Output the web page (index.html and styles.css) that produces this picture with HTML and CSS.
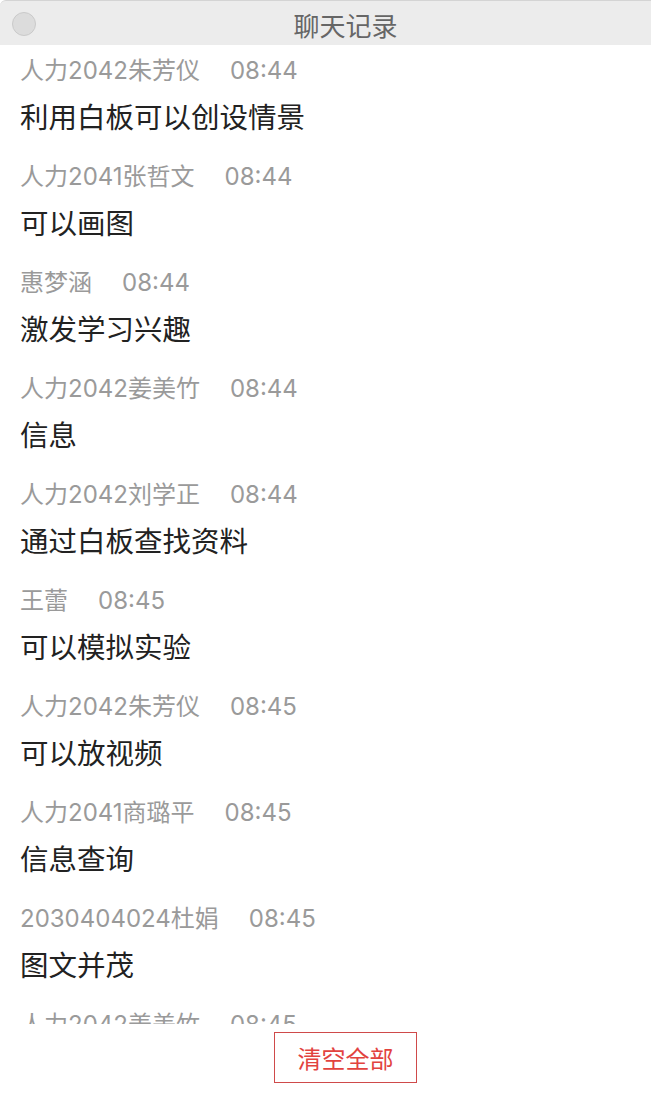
FILE: index.html
```html
<!DOCTYPE html>
<html>
<head>
    <meta charset="utf-8">
    <title>聊天记录</title>
    <link rel="stylesheet" href="styles.css">
</head>
<body>
    <div class="window">
        <div class="titlebar">
            <span class="close-dot"></span>
            <span class="title">聊天记录</span>
        </div>

        <div class="chat-list">
            <div class="chat-item">
                <div class="meta"><span class="name">人力2042朱芳仪</span><span class="time">08:44</span></div>
                <div class="msg">利用白板可以创设情景</div>
            </div>
            <div class="chat-item">
                <div class="meta"><span class="name">人力2041张哲文</span><span class="time">08:44</span></div>
                <div class="msg">可以画图</div>
            </div>
            <div class="chat-item">
                <div class="meta"><span class="name">惠梦涵</span><span class="time">08:44</span></div>
                <div class="msg">激发学习兴趣</div>
            </div>
            <div class="chat-item">
                <div class="meta"><span class="name">人力2042姜美竹</span><span class="time">08:44</span></div>
                <div class="msg">信息</div>
            </div>
            <div class="chat-item">
                <div class="meta"><span class="name">人力2042刘学正</span><span class="time">08:44</span></div>
                <div class="msg">通过白板查找资料</div>
            </div>
            <div class="chat-item">
                <div class="meta"><span class="name">王蕾</span><span class="time">08:45</span></div>
                <div class="msg">可以模拟实验</div>
            </div>
            <div class="chat-item">
                <div class="meta"><span class="name">人力2042朱芳仪</span><span class="time">08:45</span></div>
                <div class="msg">可以放视频</div>
            </div>
            <div class="chat-item">
                <div class="meta"><span class="name">人力2041商璐平</span><span class="time">08:45</span></div>
                <div class="msg">信息查询</div>
            </div>
            <div class="chat-item">
                <div class="meta"><span class="name">2030404024杜娟</span><span class="time">08:45</span></div>
                <div class="msg">图文并茂</div>
            </div>
            <div class="chat-item">
                <div class="meta"><span class="name">人力2042姜美竹</span><span class="time">08:45</span></div>
                <div class="msg">可以交流</div>
            </div>
        </div>

        <div class="footer">
            <button class="clear-btn">清空全部</button>
        </div>
    </div>
</body>
</html>
```

FILE: styles.css
```css
body {
    margin: 0;
    padding: 0;
    background-color: #fff;
    font-family: Inter, "Noto Sans CJK SC", sans-serif;
}

.window {
    height: 1102px;
    display: flex;
    flex-direction: column;
    overflow: hidden;
}

.titlebar {
    height: 44px;
    flex-shrink: 0;
    background-color: #ececec;
    border-top: 1px solid #d4d4d4;
    border-top-left-radius: 6px;
    display: flex;
    align-items: center;
    justify-content: center;
    padding-left: 40px;
    position: relative;
}

.titlebar .close-dot {
    position: absolute;
    left: 12px;
    top: 11px;
    width: 22px;
    height: 22px;
    border-radius: 50%;
    background-color: #dcdcdc;
    border: 1px solid #cacaca;
}

.titlebar .title {
    font-family: "Noto Sans CJK SC", sans-serif;
    font-size: 26px;
    line-height: 30px;
    color: #666;
    padding-top: 3px;
}

.chat-list {
    height: 979px;
    flex-shrink: 0;
    overflow: hidden;
    padding-top: 8px;
    box-sizing: border-box;
}

.chat-item {
    padding: 0 20px 21px 20px;
}

.chat-item .meta {
    height: 36px;
    line-height: 36px;
    font-size: 24px;
    color: #9a9a9a;
    margin-bottom: 9px;
}

.chat-item .name {
    margin-right: 30px;
}

.chat-item .msg {
    height: 40px;
    line-height: 40px;
    font-size: 28.5px;
    color: #222;
}

.footer {
    display: flex;
    justify-content: center;
    padding: 8px 0 0 40px;
}

.clear-btn {
    width: 143px;
    height: 51px;
    background-color: #fff;
    border: 1px solid #cf4a4a;
    border-radius: 0;
    color: #e2433f;
    font-family: "Noto Sans CJK SC", sans-serif;
    font-size: 24px;
    padding: 0;
    cursor: pointer;
}
```
